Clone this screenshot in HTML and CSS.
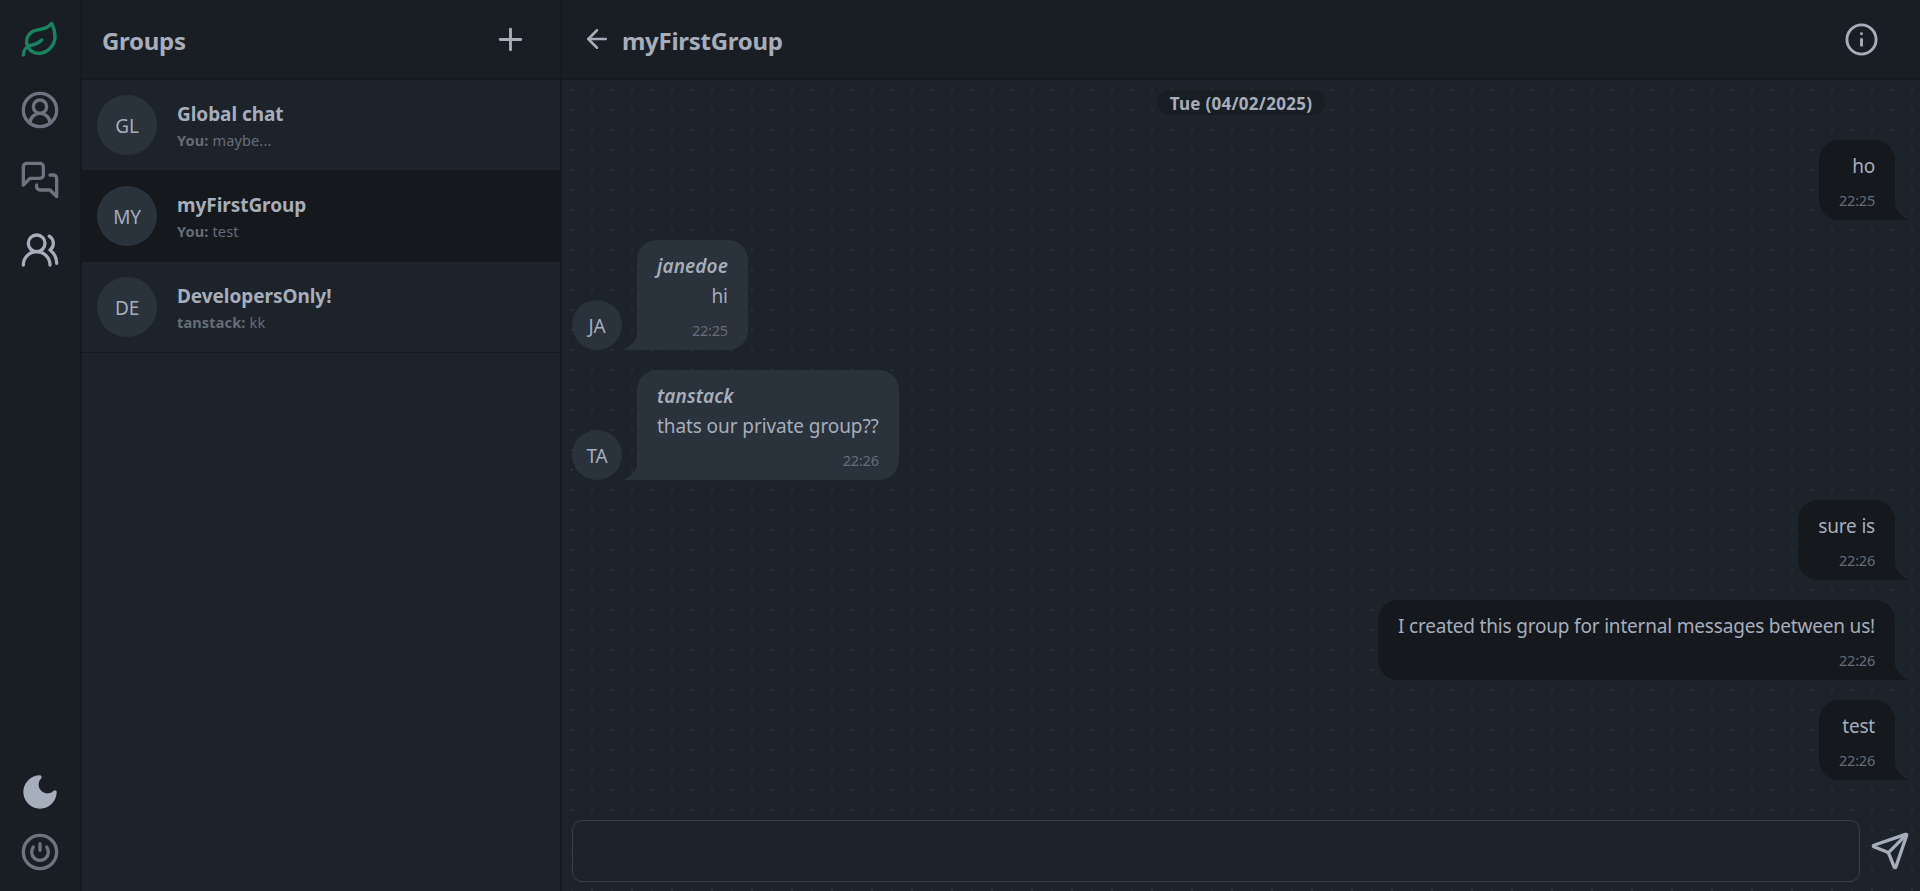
FILE: index.html
```html
<!DOCTYPE html>
<html lang="en">
<head>
<meta charset="utf-8">
<title>Groups</title>
<link rel="stylesheet" href="styles.css">
</head>
<body>
<div class="app">
  <nav class="rail">
    <div class="rail-group rail-top">
      <svg class="icon leaf" viewBox="0 0 24 24"><path d="M11 20A7 7 0 0 1 9.8 6.1C15.5 5 17 4.48 19 2c1 2 2 4.18 2 8 0 5.5-4.78 10-10 10Z"/><path d="M2 21c0-3 1.85-5.36 5.08-6C9.5 14.52 12 13 13 12"/></svg>
      <svg class="icon muted" viewBox="0 0 24 24"><path d="M18 20a6 6 0 0 0-12 0"/><circle cx="12" cy="10" r="4"/><circle cx="12" cy="12" r="10"/></svg>
      <svg class="icon muted" viewBox="0 0 24 24"><path d="M14 9a2 2 0 0 1-2 2H6l-4 4V4a2 2 0 0 1 2-2h8a2 2 0 0 1 2 2z"/><path d="M18 9h2a2 2 0 0 1 2 2v11l-4-4h-6a2 2 0 0 1-2-2v-1"/></svg>
      <svg class="icon" viewBox="0 0 24 24"><path d="M18 21a8 8 0 0 0-16 0"/><circle cx="10" cy="8" r="5"/><path d="M22 20c0-3.37-2-6.5-4-8a5 5 0 0 0-.45-8.3"/></svg>
    </div>
    <div class="rail-group rail-bottom">
      <svg class="icon filled" viewBox="0 0 24 24"><path d="M12 3a6 6 0 0 0 9 9 9 9 0 1 1-9-9Z"/></svg>
      <svg class="icon muted" viewBox="0 0 24 24"><path d="M12 7v4"/><path d="M7.998 9.003a5 5 0 1 0 8-.005"/><circle cx="12" cy="12" r="10"/></svg>
    </div>
  </nav>

  <aside class="groups">
    <header class="bar groups-bar">
      <h1 class="title title-groups">Groups</h1>
      <svg class="icon icon-md" viewBox="0 0 24 24"><path d="M5 12h14"/><path d="M12 5v14"/></svg>
    </header>
    <div class="group">
      <div class="avatar">GL</div>
      <div class="group-text">
        <div class="group-name">Global chat</div>
        <div class="preview"><b>You:</b> maybe...</div>
      </div>
    </div>
    <div class="group selected">
      <div class="avatar">MY</div>
      <div class="group-text">
        <div class="group-name">myFirstGroup</div>
        <div class="preview"><b>You:</b> test</div>
      </div>
    </div>
    <div class="group">
      <div class="avatar">DE</div>
      <div class="group-text">
        <div class="group-name">DevelopersOnly!</div>
        <div class="preview"><b>tanstack:</b> kk</div>
      </div>
    </div>
  </aside>

  <main class="chat">
    <header class="bar chat-bar">
      <svg class="icon icon-sm" viewBox="0 0 24 24"><path d="m12 19-7-7 7-7"/><path d="M19 12H5"/></svg>
      <h2 class="title">myFirstGroup</h2>
      <svg class="icon icon-md info" viewBox="0 0 24 24"><circle cx="12" cy="12" r="10"/><path d="M12 16v-4"/><path d="M12 8h.01"/></svg>
    </header>
    <div class="canvas">
      <div class="messages">
        <div class="date">Tue (04/02/2025)</div>
        <div class="message mine"><div class="bubble"><p>ho</p><time>22:25</time><svg class="tail" viewBox="0 0 3 3"><path d="M0 0L0 3L3 3C2 3 0 1 0 0"/></svg></div></div>
        <div class="message">
          <div class="avatar avatar-sm">JA</div>
          <div class="bubble"><p class="author">janedoe</p><p class="end">hi</p><time>22:25</time><svg class="tail" viewBox="0 0 3 3"><path d="M0 3L3 3L3 0C3 1 1 3 0 3"/></svg></div>
        </div>
        <div class="message">
          <div class="avatar avatar-sm">TA</div>
          <div class="bubble"><p class="author">tanstack</p><p class="end">thats our private group??</p><time>22:26</time><svg class="tail" viewBox="0 0 3 3"><path d="M0 3L3 3L3 0C3 1 1 3 0 3"/></svg></div>
        </div>
        <div class="message mine"><div class="bubble"><p>sure is</p><time>22:26</time><svg class="tail" viewBox="0 0 3 3"><path d="M0 0L0 3L3 3C2 3 0 1 0 0"/></svg></div></div>
        <div class="message mine"><div class="bubble"><p>I created this group for internal messages between us!</p><time>22:26</time><svg class="tail" viewBox="0 0 3 3"><path d="M0 0L0 3L3 3C2 3 0 1 0 0"/></svg></div></div>
        <div class="message mine"><div class="bubble"><p>test</p><time>22:26</time><svg class="tail" viewBox="0 0 3 3"><path d="M0 0L0 3L3 3C2 3 0 1 0 0"/></svg></div></div>
      </div>
      <footer class="composer">
        <div class="field"></div>
        <svg class="icon" viewBox="0 0 24 24"><path d="M14.536 21.686a.5.5 0 0 0 .937-.024l6.5-19a.496.496 0 0 0-.635-.635l-19 6.5a.5.5 0 0 0-.024.937l7.93 3.18a2 2 0 0 1 1.112 1.11z"/><path d="m21.854 2.147-10.94 10.939"/></svg>
      </footer>
    </div>
  </main>
</div>
</body>
</html>
```
FILE: styles.css
```css
:root {
  --base-100: #1d232a;
  --base-200: #191e24;
  --base-300: #15191e;
  --neutral: #2a323c;
  --text: #a6adbb;
}

* { box-sizing: border-box; margin: 0; }

body {
  background: var(--base-100);
  color: var(--text);
  font: 19px/30px "Noto Sans", "Open Sans", sans-serif;
}

.app { display: flex; height: 100vh; overflow: hidden; }

.icon {
  flex: none;
  width: 40px;
  height: 40px;
  fill: none;
  stroke: var(--text);
  stroke-width: 2;
  stroke-linecap: round;
  stroke-linejoin: round;
}
.icon-md { width: 35px; height: 35px; }
.icon-sm { width: 30px; height: 30px; }
.muted { stroke: #6e7380; }
.leaf { stroke: #17835f; }
.filled { fill: var(--text); }

.rail {
  display: flex;
  flex-direction: column;
  justify-content: space-between;
  width: 82px;
  padding: 20px 20px 19px;
  background: var(--base-200);
  border-right: 2px solid var(--base-300);
}
.rail-group { display: flex; flex-direction: column; }
.rail-top { gap: 30px; }
.rail-bottom { gap: 20px; }

.bar {
  display: flex;
  align-items: center;
  flex: none;
  height: 80px;
  background: var(--base-200);
  border-bottom: 2px solid var(--base-300);
}
.title { font-size: 24px; line-height: 35px; font-weight: 700; letter-spacing: -0.28px; padding-top: 3px; }

.groups { width: 480px; border-right: 2px solid var(--base-300); }
.groups-bar { justify-content: space-between; padding: 0 32px 0 20px; }

.group {
  display: flex;
  align-items: center;
  gap: 20px;
  height: 91px;
  padding: 0 15px;
  border-bottom: 1px solid var(--base-300);
}
.selected { background: var(--base-300); }
.avatar {
  display: flex;
  align-items: center;
  justify-content: center;
  flex: none;
  width: 60px;
  height: 60px;
  padding-top: 2px;
  border-radius: 50%;
  background: var(--neutral);
  letter-spacing: -0.2px;
}
.avatar-sm { width: 50px; height: 50px; }
.group-name { font-weight: 700; line-height: 30px; letter-spacing: -0.05px; }
.preview { color: #666c78; font-size: 14.5px; line-height: 23px; letter-spacing: 0.15px; }

.chat { display: flex; flex-direction: column; flex: 1; }
.chat-bar { gap: 10px; padding: 0 41px 0 20px; }
.info { margin-left: auto; }

.canvas {
  display: flex;
  flex-direction: column;
  justify-content: space-between;
  flex: 1;
  padding: 10px 10px 9px;
  background-image: conic-gradient(from 90deg at 18px 18px, var(--neutral) 25%, transparent 0);
  background-position: -9px -9px;
  background-size: 20px 20px;
}
.messages { display: flex; flex-direction: column; }
.date {
  align-self: center;
  height: 25px;
  margin-bottom: 15px;
  padding: 1px 12.5px 0;
  border-radius: 13px;
  background: var(--base-200);
  font-size: 17px;
  font-weight: 700;
  line-height: 25px;
  letter-spacing: 0.28px;
}
.message { display: flex; align-items: flex-end; gap: 15px; padding: 10px 0; }
.mine { justify-content: flex-end; padding-right: 15px; }
.bubble {
  position: relative;
  display: flex;
  flex-direction: column;
  padding: 11px 20px 10px;
  border-radius: 20px 20px 20px 0;
  background: var(--neutral);
  letter-spacing: -0.09px;
}
.mine .bubble {
  border-radius: 20px 20px 0 20px;
  background: var(--base-300);
  text-align: right;
  letter-spacing: -0.19px;
}
.author { font-style: italic; font-weight: 600; letter-spacing: 0.1px; }
.end { text-align: right; }
.bubble time {
  margin-top: 9px;
  color: #666c78;
  font-size: 14.5px;
  line-height: 20px;
  letter-spacing: -0.2px;
  text-align: right;
}
.tail { position: absolute; left: -15px; bottom: 0; width: 15px; height: 15px; fill: var(--neutral); }
.mine .tail { left: auto; right: -15px; fill: var(--base-300); }

.composer { display: flex; align-items: center; gap: 10px; height: 62px; }
.field {
  flex: 1;
  height: 62px;
  border: 1px solid #383f48;
  border-radius: 10px;
  background: var(--base-100);
}
```
